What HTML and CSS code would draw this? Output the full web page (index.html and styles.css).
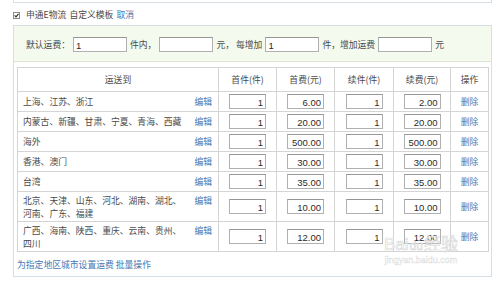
FILE: index.html
```html
<!DOCTYPE html>
<html lang="zh-CN">
<head>
<meta charset="utf-8">
<title>运费模板</title>
<link rel="stylesheet" href="styles.css">
</head>
<body>
<div class="prev"></div>
<div class="check-row">
  <span class="cb"><svg width="7" height="7" viewBox="0 0 7 7"><rect x="0.5" y="0.5" width="6" height="6" fill="#fff" stroke="#8a8a8a"/><path d="M1.6 3.4 L3 4.9 L5.5 1.8" fill="none" stroke="#333" stroke-width="1.2"/></svg></span>
  <span>申通E物流</span><span>自定义模板</span><a class="link">取消</a>
</div>
<div class="panel">
  <div class="fee">
    <span>默认运费：</span><input class="fi" value="1"><span>件内，</span><input class="fi" value=""><span>元，&nbsp;每增加</span><input class="fi" value="1"><span>件，增加运费</span><input class="fi" value=""><span>元</span>
  </div>
  <div class="body">
    <table class="grid">
      <colgroup>
        <col class="c1"><col class="c2"><col class="c3"><col class="c4"><col class="c5"><col class="c6">
      </colgroup>
      <thead>
        <tr><th>运送到</th><th>首件(件)</th><th>首费(元)</th><th>续件(件)</th><th>续费(元)</th><th>操作</th></tr>
      </thead>
      <tbody>
        <tr class="r1">
          <td class="area"><div class="ar"><span class="names">上海、江苏、浙江</span><a class="link">编辑</a></div></td>
          <td><input class="ti" value="1"></td><td><input class="ti" value="6.00"></td><td><input class="ti" value="1"></td><td><input class="ti" value="2.00"></td><td class="op"><a class="link">删除</a></td>
        </tr>
        <tr class="r1">
          <td class="area"><div class="ar"><span class="names">内蒙古、新疆、甘肃、宁夏、青海、西藏</span><a class="link">编辑</a></div></td>
          <td><input class="ti" value="1"></td><td><input class="ti" value="20.00"></td><td><input class="ti" value="1"></td><td><input class="ti" value="20.00"></td><td class="op"><a class="link">删除</a></td>
        </tr>
        <tr class="r1">
          <td class="area"><div class="ar"><span class="names">海外</span><a class="link">编辑</a></div></td>
          <td><input class="ti" value="1"></td><td><input class="ti" value="500.00"></td><td><input class="ti" value="1"></td><td><input class="ti" value="500.00"></td><td class="op"><a class="link">删除</a></td>
        </tr>
        <tr class="r1">
          <td class="area"><div class="ar"><span class="names">香港、澳门</span><a class="link">编辑</a></div></td>
          <td><input class="ti" value="1"></td><td><input class="ti" value="30.00"></td><td><input class="ti" value="1"></td><td><input class="ti" value="30.00"></td><td class="op"><a class="link">删除</a></td>
        </tr>
        <tr class="r1">
          <td class="area"><div class="ar"><span class="names">台湾</span><a class="link">编辑</a></div></td>
          <td><input class="ti" value="1"></td><td><input class="ti" value="35.00"></td><td><input class="ti" value="1"></td><td><input class="ti" value="35.00"></td><td class="op"><a class="link">删除</a></td>
        </tr>
        <tr class="r2">
          <td class="area"><div class="ar"><span class="names">北京、天津、山东、河北、湖南、湖北、河南、广东、福建</span><a class="link">编辑</a></div></td>
          <td><input class="ti" value="1"></td><td><input class="ti" value="10.00"></td><td><input class="ti" value="1"></td><td><input class="ti" value="10.00"></td><td class="op"><a class="link">删除</a></td>
        </tr>
        <tr class="r2">
          <td class="area"><div class="ar"><span class="names">广西、海南、陕西、重庆、云南、贵州、四川</span><a class="link">编辑</a></div></td>
          <td><input class="ti" value="1"></td><td><input class="ti" value="12.00"></td><td><input class="ti" value="1"></td><td><input class="ti" value="12.00"></td><td class="op"><a class="link">删除</a></td>
        </tr>
      </tbody>
    </table>
    <div class="ops"><a class="link">为指定地区城市设置运费</a> <a class="link">批量操作</a></div>
  </div>
</div>
<div class="watermark"><span class="wm-big">Bai<span class="paw">du</span>经验</span><span class="wm-small">jingyan.baidu.com</span></div>
</body>
</html>
```

FILE: styles.css
```css
html, body {
  margin: 0;
  padding: 0;
  background: #fff;
}
body {
  width: 500px;
  height: 287px;
  overflow: hidden;
  position: relative;
  font-family: "Noto Sans CJK SC", "Noto Sans", sans-serif;
  font-size: 8.8px;
  color: #4a4a4a;
}
.link {
  color: #4678b4;
  text-decoration: none;
  cursor: pointer;
}
.prev {
  margin-left: 13px;
  width: 477px;
  height: 2px;
  border: 1px solid #d6dee6;
  border-top: 0;
}
.check-row {
  display: flex;
  align-items: center;
  gap: 3px;
  height: 20px;
  padding-top: 2px;
  margin-left: 13px;
  line-height: 12px;
}
.cb {
  display: flex;
  width: 7px;
  height: 7px;
  margin-right: 3px;
}
.panel {
  margin-left: 13px;
  width: 477px;
  border: 1px solid #d6dee6;
}
.fee {
  height: 33px;
  padding-top: 2px;
  padding-left: 12px;
  background: #f4faee;
  border-bottom: 1px solid #dde6d4;
  display: flex;
  align-items: center;
  gap: 3px;
  line-height: 12px;
}
.fi, .ti {
  box-sizing: border-box;
  height: 15px;
  margin: 0;
  border: 1px solid #b0b0b0;
  border-top-color: #969696;
  background: #fff;
  font-family: "Liberation Sans", Arial, sans-serif;
  font-size: 9.5px;
  color: #2a2a2a;
  outline: none;
}
.fi {
  width: 54px;
  padding: 1px 2px 0;
}
.ti {
  width: 37px;
  padding: 1px 2px 0;
  text-align: right;
  display: block;
  margin: 0 auto;
}
.body {
  padding: 5px 3px 0;
}
.grid {
  width: 471px;
  border-collapse: collapse;
  table-layout: fixed;
}
.c1 { width: 201px; }
.c2 { width: 58px; }
.c3 { width: 58px; }
.c4 { width: 59px; }
.c5 { width: 57px; }
.c6 { width: 38px; }
.grid th, .grid td {
  border: 1px solid #d4d4d4;
  padding: 0;
  vertical-align: middle;
}
.grid th {
  height: 23px;
  font-weight: normal;
  text-align: center;
  color: #4a4a4a;
  background: #fff;
}
.r1 td { height: 19px; }
.r2 td { height: 29px; }
.area {
  padding: 0 6px 0 5px !important;
}
.ar {
  display: flex;
  align-items: flex-start;
  gap: 8px;
  line-height: 13px;
}
.names {
  flex: 1;
}
.op {
  text-align: center;
}
.ops {
  padding: 5px 0 3px;
  line-height: 16px;
}
.watermark {
  position: absolute;
  left: 384px;
  top: 236px;
  display: flex;
  flex-direction: column;
  align-items: center;
  color: rgba(255, 255, 255, 0.7);
  pointer-events: none;
}
.wm-big {
  font-family: "Liberation Sans", Arial, sans-serif;
  font-size: 17px;
  line-height: 18px;
  -webkit-text-stroke: 0.6px #d6d6d6;
}
.paw {
  font-size: 12px;
  margin: 0 1px;
}
.wm-small {
  font-family: "Liberation Sans", Arial, sans-serif;
  font-size: 9px;
  line-height: 11px;
  -webkit-text-stroke: 0.4px #dadada;
}
```
